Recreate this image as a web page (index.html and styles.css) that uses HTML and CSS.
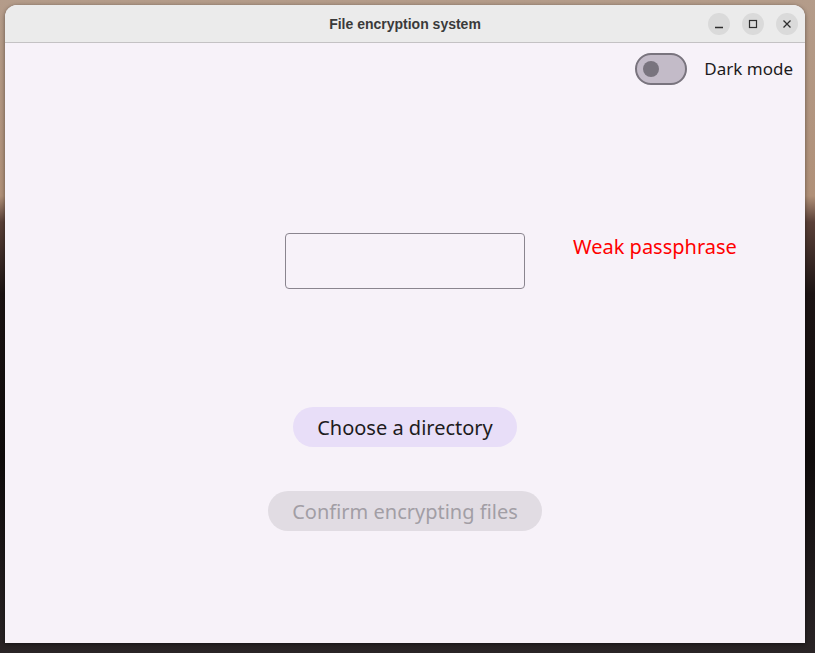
FILE: index.html
```html
<!DOCTYPE html>
<html lang="en">
<head>
<meta charset="utf-8">
<title>File encryption system</title>
<link rel="stylesheet" href="styles.css">
</head>
<body>
<div class="desktop">
  <div class="window">
    <header class="titlebar">
      <div class="title">File encryption system</div>
      <div class="controls">
        <span class="ctl"><svg width="10" height="10" viewBox="0 0 10 10"><path d="M1 8.5h8" stroke="#2e2e2e" stroke-width="1.3" fill="none"/></svg></span>
        <span class="ctl"><svg width="10" height="10" viewBox="0 0 10 10"><rect x="1.5" y="1.5" width="7" height="7" stroke="#2e2e2e" stroke-width="1.2" fill="none"/></svg></span>
        <span class="ctl"><svg width="10" height="10" viewBox="0 0 10 10"><path d="M1.5 1.5l7 7M8.5 1.5l-7 7" stroke="#2e2e2e" stroke-width="1.3" fill="none"/></svg></span>
      </div>
    </header>
    <main class="content">
      <div class="toprow">
        <span class="switch"><span class="knob"></span></span>
        <span class="label">Dark mode</span>
      </div>
      <div class="passrow">
        <div class="side"></div>
        <div class="field"></div>
        <div class="side warn">Weak passphrase</div>
      </div>
      <button class="btn tonal">Choose a directory</button>
      <button class="btn disabled">Confirm encrypting files</button>
    </main>
  </div>
</div>
</body>
</html>
```
FILE: styles.css
```css
html, body {
  margin: 0;
  padding: 0;
  height: 100%;
}
body {
  background: linear-gradient(180deg, #b49c8a 0%, #b09078 30%, #5a4038 34%, #1c1414 45%, #100c0c 70%, #2a2426 100%);
  font-family: "Noto Sans", "Open Sans", sans-serif;
}
.desktop {
  padding: 5px 10px 10px 5px;
}
.window {
  width: 800px;
  height: 638px;
  border-radius: 12px 12px 0 0;
  background: #f7f2f9;
  box-shadow: 0 1px 4px rgba(0,0,0,0.45);
  overflow: hidden;
  display: flex;
  flex-direction: column;
}
.titlebar {
  height: 37px;
  flex: none;
  background: #ebebeb;
  border-bottom: 1px solid #c4c2c4;
  display: flex;
  align-items: center;
  justify-content: center;
  position: relative;
}
.title {
  font-family: "Liberation Sans", Arial, sans-serif;
  font-weight: bold;
  font-size: 14px;
  color: #3a3a3a;
}
.controls {
  position: absolute;
  right: 7px;
  top: 8px;
  display: flex;
  gap: 12px;
}
.ctl {
  width: 22px;
  height: 22px;
  border-radius: 50%;
  background: #dadada;
  display: flex;
  align-items: center;
  justify-content: center;
}
.content {
  flex: 1;
  display: flex;
  flex-direction: column;
  align-items: center;
  color: #1d1b20;
  font-size: 20px;
}
.toprow {
  align-self: stretch;
  display: flex;
  justify-content: flex-end;
  align-items: center;
  gap: 17px;
  margin-top: 10px;
  padding-right: 12px;
  height: 32px;
}
.switch {
  box-sizing: border-box;
  width: 52px;
  height: 32px;
  border: 2px solid #79747e;
  border-radius: 16px;
  background: #c3bbc8;
  display: flex;
  align-items: center;
  padding-left: 6px;
}
.knob {
  width: 16px;
  height: 16px;
  border-radius: 50%;
  background: #79747e;
}
.label {
  font-size: 17px;
  line-height: 32px;
}
.passrow {
  align-self: stretch;
  display: grid;
  grid-template-columns: 1fr 240px 1fr;
  margin-top: 148px;
}
.field {
  box-sizing: border-box;
  height: 56px;
  border: 1px solid #8a858f;
  border-radius: 4px;
}
.warn {
  color: #ff0000;
  padding-left: 48px;
}
.btn {
  font-family: "Noto Sans", "Open Sans", sans-serif;
  font-size: 20px;
  height: 40px;
  border: none;
  border-radius: 20px;
  padding: 0 24px;
}
.tonal {
  margin-top: 118px;
  background: #e8def8;
  color: #1d1b20;
}
.disabled {
  margin-top: 44px;
  background: #e1dce3;
  color: #a29ea5;
}
```
